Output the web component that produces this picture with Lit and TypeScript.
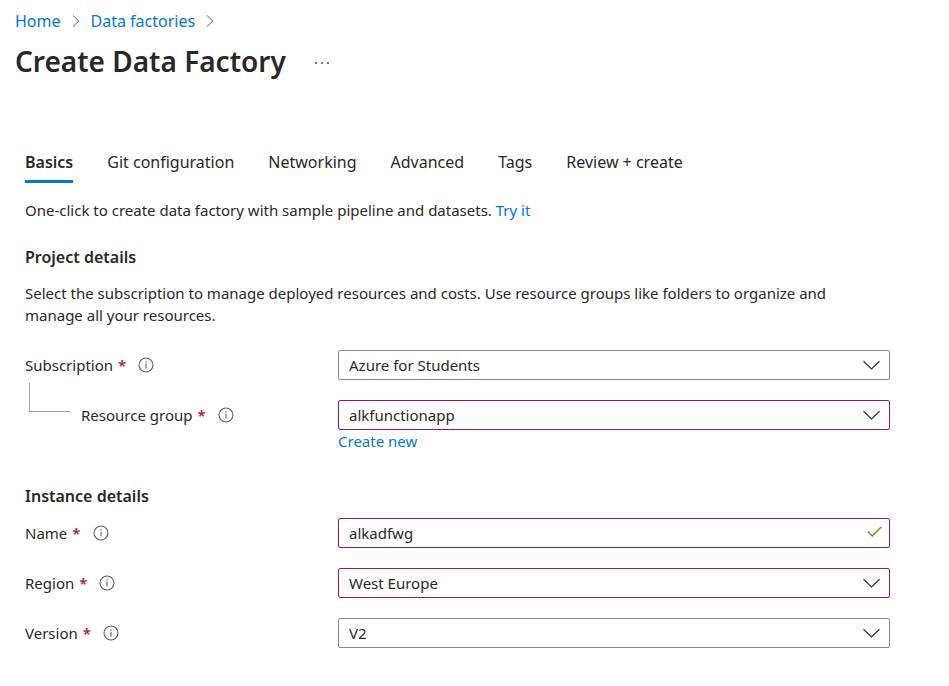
import { LitElement, html, css, svg, nothing } from "lit";
import { customElement, property, state } from "lit/decorators.js";
import { classMap } from "lit/directives/class-map.js";

const crumbArrow = html`<svg class="crumb-arrow" width="8" height="14" viewBox="0 0 8 14" aria-hidden="true">
  <path d="M1 1.5 6.8 7 1 12.5" fill="none" stroke="#605e5c" stroke-width="1" />
</svg>`;

const infoShape = svg`
  <circle cx="8" cy="8" r="7" fill="none" stroke="#605e5c" stroke-width="1.1" />
  <path d="M8 6.8v4.7" stroke="#605e5c" stroke-width="1.1" />
  <circle cx="8" cy="4.9" r="0.75" fill="#605e5c" />`;

const TABS = ["Basics", "Git configuration", "Networking", "Advanced", "Tags", "Review + create"];

@customElement("form-field")
export class FormField extends LitElement {
  @property() label = "";
  @property() value = "";
  @property() kind: "select" | "text" = "select";
  @property({ type: Boolean }) edited = false;
  @property({ type: Boolean }) nested = false;

  static styles = css`
    :host {
      display: block;
    }
    .row {
      display: grid;
      grid-template-columns: 313px minmax(0, 1fr);
      align-items: center;
    }
    .caption {
      display: flex;
      align-items: center;
    }
    .branch {
      align-self: flex-start;
      box-sizing: border-box;
      width: 41px;
      height: 29px;
      margin: -21px 11px 0 4px;
      border: solid #a19f9d;
      border-width: 0 0 1px 1px;
    }
    .star {
      margin-left: 5px;
      color: #a4262c;
      font-weight: 600;
    }
    .info {
      display: flex;
      margin-left: 12px;
      padding: 0;
      border: 0;
      background: none;
    }
    .box {
      display: grid;
      align-items: center;
    }
    .box > * {
      grid-area: 1 / 1;
    }
    .control {
      box-sizing: border-box;
      width: 100%;
      height: 30px;
      margin: 0;
      padding: 0 40px 0 10px;
      border: 1px solid #8a8886;
      border-radius: 2px;
      background: #fff;
      color: #292827;
      font: inherit;
      appearance: none;
      outline: none;
    }
    .edited {
      border-color: #881798;
    }
    .mark {
      justify-self: end;
      margin-right: 10px;
      pointer-events: none;
    }
    .tick {
      margin-right: 8px;
    }
  `;

  render() {
    const cls = classMap({ control: true, edited: this.edited });
    return html`<div class="row">
      <div class="caption">
        ${this.nested ? html`<span class="branch"></span>` : nothing}
        <label for="control">${this.label}</label>
        <span class="star">*</span>
        <button class="info" aria-label="About ${this.label}">
          <svg width="16" height="16" viewBox="0 0 16 16" aria-hidden="true">${infoShape}</svg>
        </button>
      </div>
      ${this.kind === "select"
        ? html`<div class="box">
            <select id="control" class=${cls}>
              <option>${this.value}</option>
            </select>
            <svg class="mark" width="17" height="10" viewBox="0 0 17 10" aria-hidden="true">
              <path d="M0.5 1.2 8.5 9 16.5 1.2" fill="none" stroke="#323130" stroke-width="1.2" />
            </svg>
          </div>`
        : html`<div class="box">
            <input id="control" type="text" class=${cls} .value=${this.value} />
            <svg class="mark tick" width="15" height="14" viewBox="0 0 15 14" aria-hidden="true">
              <path d="M0.8 5.6 5.2 10 14.2 1" fill="none" stroke="#57a300" stroke-width="1.4" />
            </svg>
          </div>`}
    </div>`;
  }
}

@customElement("app-root")
export class AppRoot extends LitElement {
  @state() private tab = "Basics";

  static styles = css`
    :host {
      display: block;
      min-height: 100vh;
      box-sizing: border-box;
      background: #fff;
      color: #292827;
      font: 15px/22px "Noto Sans", "Open Sans", sans-serif;
    }
    a {
      color: #0078d4;
      text-decoration: none;
    }
    .crumbs {
      display: flex;
      align-items: center;
      gap: 11px;
      padding: 10px 15px 0;
      font-size: 16px;
    }
    .title {
      display: flex;
      align-items: center;
      gap: 28px;
      padding: 9px 15px 0;
    }
    h1 {
      margin: 0;
      font-size: 28px;
      line-height: 40px;
      font-weight: 600;
    }
    .more {
      display: flex;
      padding: 4px 0 0;
      border: 0;
      background: none;
    }
    main {
      padding: 70px 59px 0 25px;
    }
    .tabs {
      display: flex;
      gap: 34px;
    }
    .tab {
      padding: 0 0 7px;
      border: 0;
      border-bottom: 3px solid transparent;
      background: none;
      color: inherit;
      font: inherit;
      font-size: 16px;
      white-space: nowrap;
    }
    .current {
      border-color: #0078d4;
      font-weight: 600;
    }
    p {
      margin: 0;
    }
    .intro {
      margin-top: 16px;
    }
    h2 {
      margin: 25px 0 0;
      font-size: 16px;
      line-height: 22px;
      font-weight: 600;
    }
    .about {
      max-width: 840px;
      margin-top: 14px;
    }
    .fields {
      display: grid;
      gap: 20px;
      margin-top: 24px;
    }
    .create {
      margin-left: 313px;
    }
    .instance {
      margin-top: 33px;
    }
    .instance + .fields {
      margin-top: 11px;
    }
  `;

  render() {
    return html`
      <nav class="crumbs" aria-label="Breadcrumb">
        <a href="#home">Home</a>${crumbArrow}<a href="#factories">Data factories</a>${crumbArrow}
      </nav>
      <div class="title">
        <h1>Create Data Factory</h1>
        <button class="more" aria-label="More">
          <svg width="16" height="4" viewBox="0 0 16 4" fill="#323130" aria-hidden="true">
            <circle cx="2" cy="2" r="0.9" />
            <circle cx="8" cy="2" r="0.9" />
            <circle cx="14" cy="2" r="0.9" />
          </svg>
        </button>
      </div>
      <main>
        <div class="tabs" role="tablist">
          ${TABS.map(
            (t) => html`<button
              role="tab"
              aria-selected=${t === this.tab}
              class=${classMap({ tab: true, current: t === this.tab })}
              @click=${() => (this.tab = t)}
            >${t}</button>`
          )}
        </div>
        <p class="intro">
          One-click to create data factory with sample pipeline and datasets. <a href="#sample">Try it</a>
        </p>
        <h2>Project details</h2>
        <p class="about">
          Select the subscription to manage deployed resources and costs. Use resource groups like folders to organize
          and manage all your resources.
        </p>
        <div class="fields">
          <form-field label="Subscription" value="Azure for Students"></form-field>
          <form-field label="Resource group" value="alkfunctionapp" edited nested></form-field>
        </div>
        <p class="create"><a href="#new">Create new</a></p>
        <h2 class="instance">Instance details</h2>
        <div class="fields">
          <form-field label="Name" value="alkadfwg" kind="text" edited></form-field>
          <form-field label="Region" value="West Europe" edited></form-field>
          <form-field label="Version" value="V2"></form-field>
        </div>
      </main>
    `;
  }
}
